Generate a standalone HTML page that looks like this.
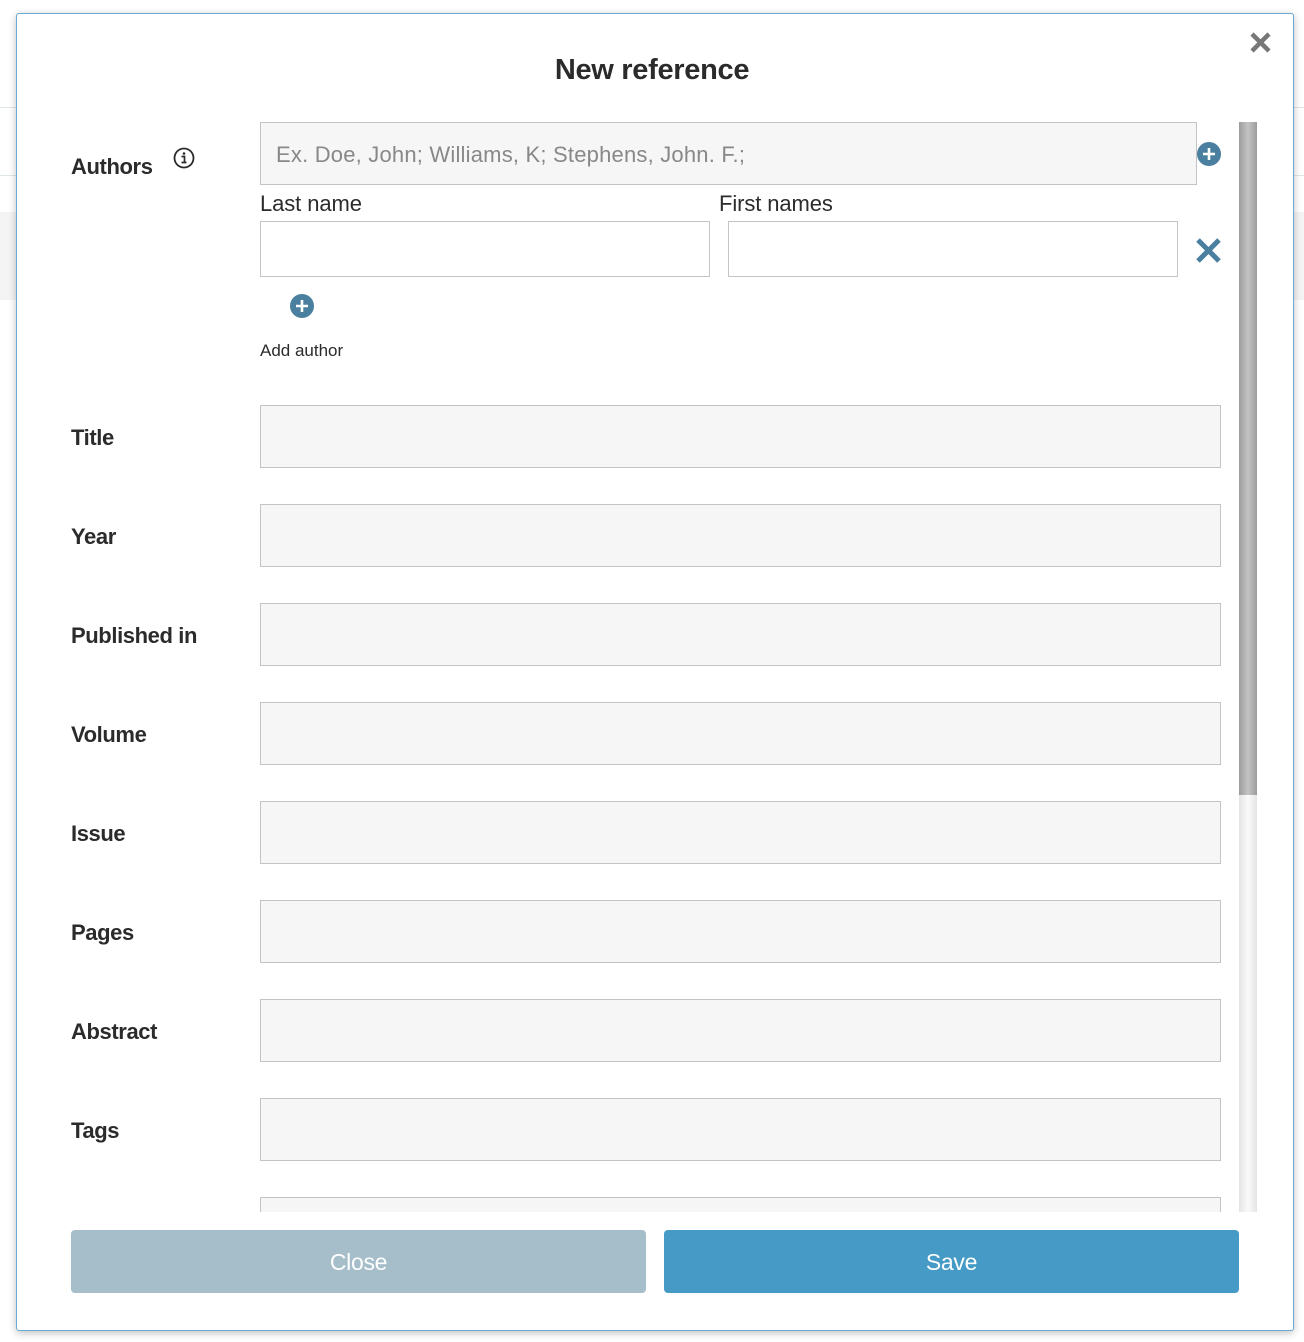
<!DOCTYPE html>
<html><head><meta charset="utf-8"><style>
*{box-sizing:border-box;margin:0;padding:0}
body{width:1304px;height:1342px;background:#fff;position:relative;overflow:hidden;font-family:"Liberation Sans",sans-serif;color:#2b2b2b}
.bg1{position:absolute;left:0;top:107px;width:1304px;height:1px;background:#dfe6ea}
.bg2{position:absolute;left:0;top:175px;width:1304px;height:1px;background:#dfe6ea}
.bg3{position:absolute;left:0;top:212px;width:1304px;height:88px;background:#f4f4f4}
.modal{position:absolute;left:16px;top:13px;width:1278px;height:1318px;background:#fff;border:1px solid #6aa9d4;border-radius:3px;box-shadow:0 2px 8px rgba(0,0,0,.25)}
.a{position:absolute}
h1{position:absolute;left:0;width:1304px;top:54px;text-align:center;font-size:29px;font-weight:bold;letter-spacing:-0.3px;color:#2b2b2b}
.lbl{position:absolute;left:71px;font-size:22px;font-weight:bold;letter-spacing:-0.4px;margin-top:1px}
.fld{position:absolute;left:260px;width:961px;height:63px;background:#f6f6f6;border:1px solid #c4c4c4}
.inp{position:absolute;height:56px;background:#fff;border:1px solid #c4c4c4;top:221px}
.sub{position:absolute;top:191px;font-size:22px;letter-spacing:-0.1px}
.btn{position:absolute;top:1230px;height:63px;width:575px;border-radius:4px;color:#fff;font-size:23px;text-align:center;line-height:65px;letter-spacing:-0.3px}
</style></head><body>
<div class="bg1"></div><div class="bg2"></div><div class="bg3"></div>
<div class="modal"></div>
<h1>New reference</h1>
<svg class="a" style="left:1249px;top:31px" width="23" height="23" viewBox="0 0 23 23"><path d="M3 3L20 20M20 3L3 20" stroke="#777" stroke-width="4.5"/></svg>

<div class="lbl" style="top:153px">Authors</div>
<svg class="a" style="left:173px;top:147px" width="22" height="22" viewBox="0 0 22 22"><circle cx="11" cy="11" r="9.5" fill="none" stroke="#2b2b2b" stroke-width="1.8"/><circle cx="11" cy="6.5" r="1.3" fill="#2b2b2b"/><path d="M8.5 9.5h3v6M8.5 15.5h5" stroke="#2b2b2b" stroke-width="1.7" fill="none"/></svg>
<div class="fld" style="top:122px;width:937px;font-size:22px;color:#888;padding-left:15px;line-height:63px;letter-spacing:0.2px">Ex. Doe, John; Williams, K; Stephens, John. F.;</div>
<svg class="a" style="left:1197px;top:142px" width="24" height="24" viewBox="0 0 24 24"><circle cx="12" cy="12" r="12" fill="#4a7fa0"/><path d="M12 6v12M6 12h12" stroke="#fff" stroke-width="2.6"/></svg>
<div class="sub" style="left:260px">Last name</div>
<div class="sub" style="left:719px">First names</div>
<div class="inp" style="left:260px;width:450px"></div>
<div class="inp" style="left:728px;width:450px"></div>
<svg class="a" style="left:1195px;top:237px" width="27" height="27" viewBox="0 0 27 27"><path d="M3 3L24 24M24 3L3 24" stroke="#4a7fa0" stroke-width="5"/></svg>
<svg class="a" style="left:290px;top:294px" width="24" height="24" viewBox="0 0 24 24"><circle cx="12" cy="12" r="12" fill="#4a7fa0"/><path d="M12 6v12M6 12h12" stroke="#fff" stroke-width="2.6"/></svg>
<div class="a" style="left:260px;top:341px;font-size:17px;letter-spacing:0px">Add author</div>

<div class="lbl" style="top:424px">Title</div><div class="fld" style="top:405px"></div>
<div class="lbl" style="top:523px">Year</div><div class="fld" style="top:504px"></div>
<div class="lbl" style="top:622px">Published in</div><div class="fld" style="top:603px"></div>
<div class="lbl" style="top:721px">Volume</div><div class="fld" style="top:702px"></div>
<div class="lbl" style="top:820px">Issue</div><div class="fld" style="top:801px"></div>
<div class="lbl" style="top:919px">Pages</div><div class="fld" style="top:900px"></div>
<div class="lbl" style="top:1018px">Abstract</div><div class="fld" style="top:999px"></div>
<div class="lbl" style="top:1117px">Tags</div><div class="fld" style="top:1098px"></div>
<div class="fld" style="top:1197px;height:15px;border-bottom:none"></div>

<div class="a" style="left:1239px;top:122px;width:18px;height:1090px;background:linear-gradient(90deg,#e4e4e4,#fafafa,#e4e4e4)"></div>
<div class="a" style="left:1239px;top:122px;width:18px;height:673px;background:linear-gradient(90deg,#9c9c9c,#c4c4c4,#9c9c9c)"></div>

<div class="btn" style="left:71px;background:#a6bdca">Close</div>
<div class="btn" style="left:664px;background:#469ac6">Save</div>
</body></html>
